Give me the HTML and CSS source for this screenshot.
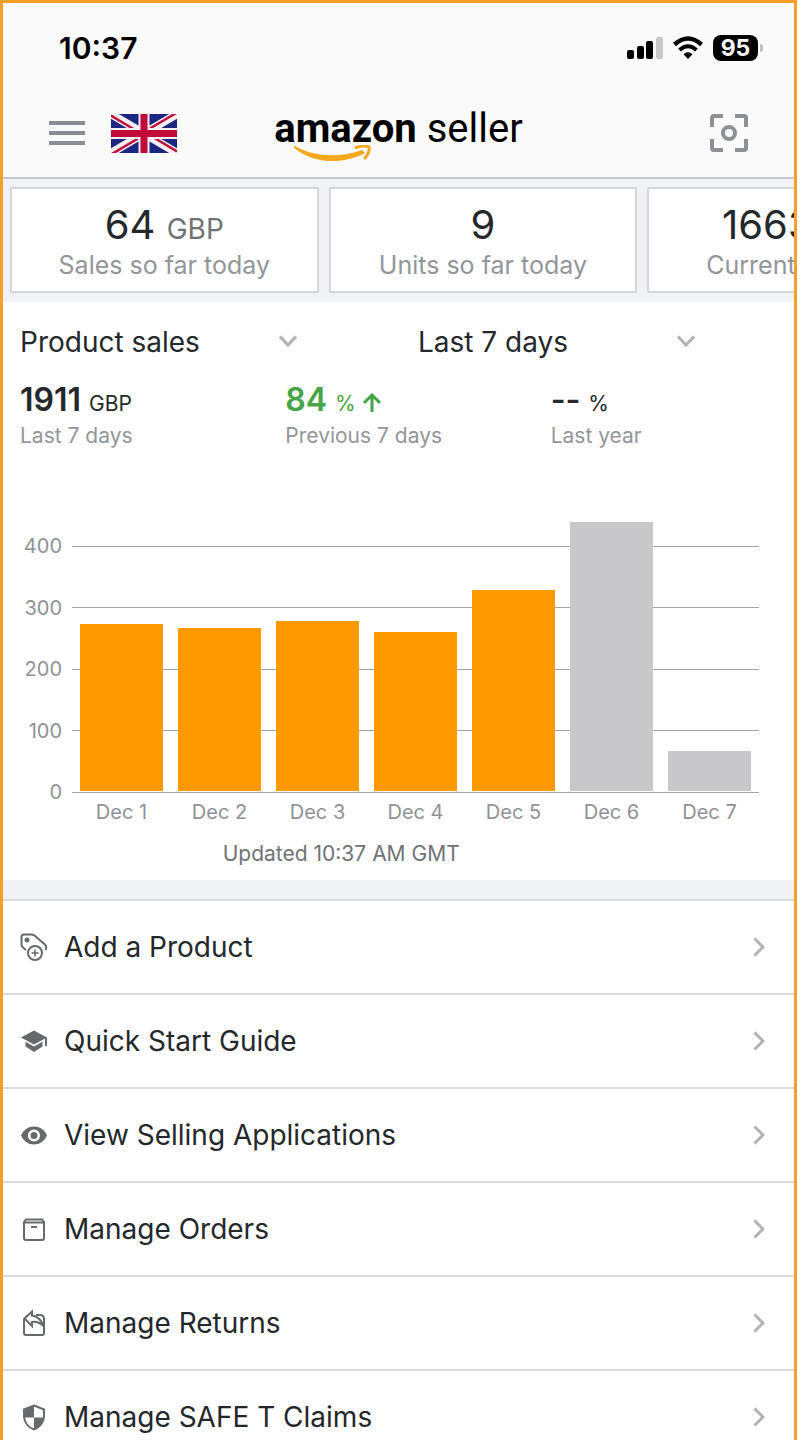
FILE: index.html
```html
<!DOCTYPE html>
<html lang="en">
<head>
    <meta charset="UTF-8">
    <meta name="viewport" content="width=device-width, initial-scale=1.0">
    <title>Amazon Seller</title>
    <link rel="stylesheet" href="styles.css">
</head>
<body>
    <div class="screen">
        <header class="top">
            <div class="status-bar">
                <span class="time">10:37</span>
                <div class="status-icons">
                    <svg width="36" height="24" viewBox="0 0 36 24">
                        <rect x="0" y="14" width="7" height="9" rx="2"/>
                        <rect x="10" y="10" width="7" height="13" rx="2"/>
                        <rect x="19" y="5" width="7" height="18" rx="2"/>
                        <rect x="29" y="1" width="7" height="22" rx="2" fill="#c8c8c8"/>
                    </svg>
                    <svg width="30" height="24" viewBox="0 0 30 24">
                        <path d="M1.500 8.500Q15 -3.500 28.500 8.500" fill="none" stroke="#000" stroke-width="4.500"/>
                        <path d="M6.500 14Q15 6.500 23.500 14" fill="none" stroke="#000" stroke-width="4"/>
                        <path d="M10.500 18.200Q15 14.500 19.500 18.200L15 23z"/>
                    </svg>
                    <span class="battery">95</span>
                </div>
            </div>
            <div class="nav-bar">
                <div class="nav-left">
                    <button class="icon-button" aria-label="Menu">
                        <svg width="36" height="26" viewBox="0 0 36 26" fill="#8a8d94">
                            <rect y="1" width="36" height="4"/>
                            <rect y="11" width="36" height="4"/>
                            <rect y="21" width="36" height="4"/>
                        </svg>
                    </button>
                    <svg class="flag" width="66" height="39" viewBox="0 0 66 39" role="img" aria-label="United Kingdom">
                        <rect width="66" height="39" fill="#1d2681"/>
                        <path d="M0 0L66 39M66 0L0 39" stroke="#f5eef2" stroke-width="8"/>
                        <path d="M0 1.500L30 19.500M66 37.500L36 19.500M66 -1.500L33 18M0 40.500L33 21" stroke="#c0103c" stroke-width="2.500"/>
                        <path d="M33 0V39M0 19.500H66" stroke="#f5eef2" stroke-width="11"/>
                        <path d="M33 0V39M0 19.500H66" stroke="#c00a38" stroke-width="7"/>
                    </svg>
                </div>
                <div class="logo">
                    <strong>amazon</strong> seller
                    <svg class="smile" width="78" height="20" viewBox="0 0 78 20">
                        <path d="M1 1C20 12 46 13 68 5L71 8C48 20 20 19 0 3C-1 2 0 0 1 1z" fill="#f5a81c"/>
                        <path d="M62 2.500Q70 0 75 2Q76 7 71 13" fill="none" stroke="#f5a81c" stroke-width="3" stroke-linecap="round"/>
                    </svg>
                </div>
                <button class="icon-button" aria-label="Scan">
                    <svg width="38" height="38" viewBox="0 0 38 38" fill="none" stroke="#8d9095" stroke-width="4">
                        <path d="M2 13V4Q2 2 4 2H13M25 2H34Q36 2 36 4V13M36 25V34Q36 36 34 36H25M13 36H4Q2 36 2 34V25"/>
                        <circle cx="19" cy="19" r="6"/>
                    </svg>
                </button>
            </div>
        </header>

        <main>
            <section class="cards">
                <div class="card">
                    <p class="card-value">64 <small>GBP</small></p>
                    <p class="card-label">Sales so far today</p>
                </div>
                <div class="card">
                    <p class="card-value">9</p>
                    <p class="card-label">Units so far today</p>
                </div>
                <div class="card">
                    <p class="card-value">1663 <small>GBP</small></p>
                    <p class="card-label">Current Balance</p>
                </div>
            </section>

            <section class="sales">
                <div class="filters">
                    <div class="filter">
                        <select aria-label="Metric">
                            <option>Product sales</option>
                            <option>Units ordered</option>
                        </select>
                        <svg class="chevron" width="20" height="12" viewBox="0 0 20 12"><path d="M2 1.500L10 10L18 1.500"/></svg>
                    </div>
                    <div class="filter">
                        <select aria-label="Period">
                            <option>Last 7 days</option>
                            <option>Last 30 days</option>
                        </select>
                        <svg class="chevron" width="20" height="12" viewBox="0 0 20 12"><path d="M2 1.500L10 10L18 1.500"/></svg>
                    </div>
                </div>

                <div class="metrics">
                    <div>
                        <p class="metric-value"><b>1911</b> GBP</p>
                        <p class="metric-label">Last 7 days</p>
                    </div>
                    <div>
                        <p class="metric-value up"><b>84</b> %
                            <svg width="20" height="20" viewBox="0 0 20 20"><path d="M10 19V3M2 10L10 2L18 10" fill="none" stroke="#46a546" stroke-width="3"/></svg>
                        </p>
                        <p class="metric-label">Previous 7 days</p>
                    </div>
                    <div>
                        <p class="metric-value"><b>--</b> %</p>
                        <p class="metric-label">Last year</p>
                    </div>
                </div>

                <div class="chart">
                    <div class="grid-lines">
                        <div class="grid-line"><span>400</span></div>
                        <div class="grid-line"><span>300</span></div>
                        <div class="grid-line"><span>200</span></div>
                        <div class="grid-line"><span>100</span></div>
                        <div class="grid-line"><span>0</span></div>
                    </div>
                    <!-- bar heights are value / 480 -->
                    <div class="bars">
                        <div class="bar" style="height: 56.800%"></div>
                        <div class="bar" style="height: 55.600%"></div>
                        <div class="bar" style="height: 57.800%"></div>
                        <div class="bar" style="height: 54.200%"></div>
                        <div class="bar" style="height: 68.500%"></div>
                        <div class="bar pending" style="height: 91.500%"></div>
                        <div class="bar pending" style="height: 13.500%"></div>
                    </div>
                    <div class="days">
                        <span>Dec 1</span>
                        <span>Dec 2</span>
                        <span>Dec 3</span>
                        <span>Dec 4</span>
                        <span>Dec 5</span>
                        <span>Dec 6</span>
                        <span>Dec 7</span>
                    </div>
                </div>
                <p class="updated">Updated 10:37 AM GMT</p>
            </section>

            <nav class="menu">
                <a href="#">
                    <svg class="menu-icon" width="28" height="28" viewBox="0 0 28 28" fill="none" stroke="#666a6d" stroke-width="2">
                        <path d="M6 17L2.500 14Q1.500 13 1.500 11.500V4Q1.500 1.500 4 1.500H11.500Q13 1.500 14.500 2.500L25.500 12Q27 14 25.500 17"/>
                        <circle cx="7" cy="7" r="2.500" fill="#666a6d" stroke="none"/>
                        <circle cx="15" cy="20" r="7"/>
                        <path d="M15 16.500V23.500M11.500 20H18.500" stroke-width="1.500"/>
                    </svg>
                    <span>Add a Product</span>
                    <svg class="arrow" width="12" height="20" viewBox="0 0 12 20"><path d="M1.500 1.500L10 10L1.500 18.500"/></svg>
                </a>
                <a href="#">
                    <svg class="menu-icon" width="28" height="28" viewBox="0 0 28 28" fill="#666a6d">
                        <path d="M14 3.500L1 10.500L14 17.500L25 11.600V19H27V10.500z"/>
                        <path d="M5.500 14.800V19.500L14 25L22.500 19.500V14.800L14 19.500z"/>
                    </svg>
                    <span>Quick Start Guide</span>
                    <svg class="arrow" width="12" height="20" viewBox="0 0 12 20"><path d="M1.500 1.500L10 10L1.500 18.500"/></svg>
                </a>
                <a href="#">
                    <svg class="menu-icon" width="28" height="28" viewBox="0 0 28 28">
                        <path d="M1 14.500Q5 5.500 14 5.500T27 14.500Q23 23.500 14 23.500T1 14.500z" fill="#666a6d"/>
                        <circle cx="14" cy="14.500" r="4.800" fill="#666a6d" stroke="#fff" stroke-width="2.600"/>
                    </svg>
                    <span>View Selling Applications</span>
                    <svg class="arrow" width="12" height="20" viewBox="0 0 12 20"><path d="M1.500 1.500L10 10L1.500 18.500"/></svg>
                </a>
                <a href="#">
                    <svg class="menu-icon" width="28" height="28" viewBox="0 0 28 28" fill="none" stroke="#666a6d" stroke-width="2">
                        <path d="M4 7V23Q4 25 6 25H22Q24 25 24 23V7L22 4.500H6zM4 7.500H24"/>
                        <path d="M11 12H17"/>
                    </svg>
                    <span>Manage Orders</span>
                    <svg class="arrow" width="12" height="20" viewBox="0 0 12 20"><path d="M1.500 1.500L10 10L1.500 18.500"/></svg>
                </a>
                <a href="#">
                    <svg class="menu-icon" width="28" height="28" viewBox="0 0 28 28" fill="none" stroke="#666a6d" stroke-width="2">
                        <path d="M5 9L4 11V24Q4 26 6 26H22Q24 26 24 24V9Q23 6 20.500 6H16"/>
                        <path d="M4.500 9.500L12 2.500V6.500Q20 7.500 23.500 17Q18 12 12 13V17z"/>
                    </svg>
                    <span>Manage Returns</span>
                    <svg class="arrow" width="12" height="20" viewBox="0 0 12 20"><path d="M1.500 1.500L10 10L1.500 18.500"/></svg>
                </a>
                <a href="#">
                    <svg class="menu-icon" width="28" height="28" viewBox="0 0 28 28">
                        <path d="M14 2.500L24 6.500V14Q23 23 14 26.500Q5 23 4 14V6.500z" fill="#fff" stroke="#666a6d" stroke-width="2"/>
                        <path d="M14 2V14.500H4V6.500zM14 14.500H24Q22.500 23.500 14 26.500z" fill="#666a6d"/>
                    </svg>
                    <span>Manage SAFE T Claims</span>
                    <svg class="arrow" width="12" height="20" viewBox="0 0 12 20"><path d="M1.500 1.500L10 10L1.500 18.500"/></svg>
                </a>
            </nav>
        </main>
    </div>
</body>
</html>
```
FILE: styles.css
```css
* {
    box-sizing: border-box;
}

body {
    margin: 0;
    background-color: #fff;
    color: #24282b;
    font-family: Inter, "Liberation Sans", sans-serif;
}

p {
    margin: 0;
}

svg {
    display: block;
}

.screen {
    margin-right: 13px;
    border: 3px solid #f4a02a;
    border-bottom: 0;
    overflow: hidden;
}

/* header */
.top {
    background-color: #fafafa;
    border-bottom: 2px solid #c3c6cd;
}

.status-bar {
    display: flex;
    justify-content: space-between;
    align-items: center;
    height: 90px;
    padding: 0 36px 0 56px;
    color: #000;
}

.time {
    font-size: 30px;
    font-weight: 600;
}

.status-icons {
    display: flex;
    align-items: center;
    gap: 10px;
}

.battery {
    position: relative;
    width: 45px;
    border-radius: 8px;
    background-color: #000;
    color: #fff;
    font-size: 23px;
    font-weight: 700;
    line-height: 26px;
    text-align: center;
}

.battery::after {
    content: "";
    position: absolute;
    top: 9px;
    right: -5px;
    width: 3px;
    height: 8px;
    border-radius: 0 3px 3px 0;
    background-color: #c0c0c0;
}

.nav-bar {
    display: flex;
    justify-content: space-between;
    align-items: center;
    height: 84px;
    padding: 0 46px 4px;
}

.nav-left {
    display: flex;
    align-items: center;
    gap: 26px;
}

.icon-button {
    padding: 0;
    border: 0;
    background: none;
}

.logo {
    position: relative;
    margin-right: 90px;
    padding-bottom: 8px;
    color: #000;
    font-family: Roboto, sans-serif;
    font-size: 40px;
    line-height: 56px;
}

.smile {
    position: absolute;
    top: 44px;
    left: 20px;
}

/* summary cards */
.cards {
    display: flex;
    gap: 10px;
    padding: 8px 0 9px 7px;
    background-color: #f1f2f5;
    overflow: hidden;
}

.card {
    flex: 0 0 calc(40% - 5px);
    padding: 12px 0 10px;
    border: 2px solid #d5d7da;
    background-color: #fff;
    text-align: center;
}

.card-value {
    font-size: 40px;
    line-height: 48px;
}

.card-value small {
    color: #707376;
    font-size: 28px;
    line-height: 1;
}

.card-label {
    color: #939699;
    font-size: 25px;
    line-height: 32px;
}

/* product sales */
.sales {
    padding-left: 17px;
    background-color: #fff;
}

.filters,
.metrics {
    display: grid;
    gap: 22px;
}

.filters {
    grid-template-columns: repeat(2, 1fr);
    padding-top: 20px;
}

.filter {
    position: relative;
    width: 74%;
}

.filter select {
    appearance: none;
    width: 100%;
    height: 40px;
    padding: 0;
    border: 0;
    background: none;
    color: inherit;
    font-family: inherit;
    font-size: 28px;
}

.chevron {
    position: absolute;
    top: 13px;
    right: 0;
    pointer-events: none;
}

.chevron path,
.arrow path {
    fill: none;
    stroke: #b0b2b5;
    stroke-width: 3;
}

.metrics {
    grid-template-columns: repeat(3, 1fr);
    padding-top: 22px;
}

.metric-value {
    font-size: 21px;
    line-height: 36px;
}

.metric-value b {
    margin-right: 2px;
    font-size: 32px;
    font-weight: 600;
    line-height: 1;
}

.metric-value svg {
    display: inline-block;
    vertical-align: -2px;
}

.up {
    color: #46a546;
}

.metric-label {
    color: #939699;
    font-size: 21px;
    line-height: 28px;
}

/* chart */
.chart {
    display: grid;
    grid-template-rows: 294px 42px;
    padding: 47px 35px 0 0;
    color: #8f9296;
    font-size: 20px;
}

.grid-lines,
.bars {
    grid-row: 1;
    grid-column: 1;
}

.grid-lines {
    display: flex;
    flex-direction: column;
    justify-content: space-between;
    height: 270px;
    align-self: end;
    margin-bottom: -13px;
}

.grid-line {
    display: flex;
    align-items: center;
    gap: 10px;
    line-height: 24px;
}

.grid-line span {
    width: 42px;
    text-align: right;
}

.grid-line::after {
    content: "";
    flex: 1;
    height: 1px;
    background-color: #a3a5a8;
}

.bars,
.days {
    display: flex;
    gap: 15px;
    padding: 0 8px 0 60px;
}

.bars {
    align-items: flex-end;
}

.bar {
    flex: 1;
    background-color: #ff9900;
}

.pending {
    background-color: #c8c8cb;
}

.days span {
    flex: 1;
    line-height: 42px;
    text-align: center;
}

.updated {
    padding: 6px 17% 11px 0;
    color: #707376;
    font-size: 21px;
    line-height: 30px;
    text-align: center;
}

/* menu */
.menu {
    border-top: 19px solid #f1f2f5;
}

.menu a {
    display: flex;
    align-items: center;
    gap: 16px;
    height: 94px;
    padding: 0 29px 0 17px;
    border-top: 2px solid #dadcde;
    color: inherit;
    font-size: 28px;
    text-decoration: none;
}

.arrow {
    margin-left: auto;
}
```
